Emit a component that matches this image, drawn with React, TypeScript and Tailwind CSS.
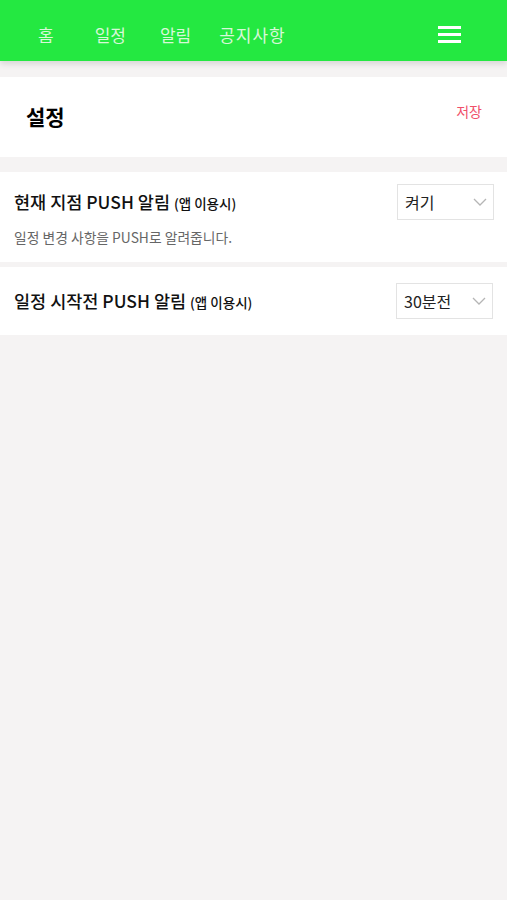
import React from 'react';

const font = { fontFamily: '"Noto Sans CJK KR", "Noto Sans", sans-serif' };

const Chevron = () => (
  <svg width="14" height="8" viewBox="0 0 14 8" fill="none">
    <path d="M1 1l6 6 6-6" stroke="#b5b5b5" strokeWidth="1.3" />
  </svg>
);

const SelectBox: React.FC<{ value: string }> = ({ value }) => (
  <div className="flex items-center justify-between w-[97px] h-[36px] border border-[#e3e3e3] bg-white pl-[7px] pr-[6px] text-[16px] text-[#222]">
    <span>{value}</span>
    <Chevron />
  </div>
);

export default function App() {
  return (
    <div className="min-h-[900px] bg-[#f5f3f3]" style={font}>
      {/* Header */}
      <div className="relative h-[61px] bg-[#24e841] flex items-center pt-[8px] px-[38px] shadow-[0_3px_6px_rgba(0,0,0,0.12)] z-10">
        <nav className="flex items-center text-[17px] text-[#d8f8d8]">
          <span className="mr-[41px]">홈</span>
          <span className="mr-[34px]">일정</span>
          <span className="mr-[28px]">알림</span>
          <span className="tracking-[1px]">공지사항</span>
        </nav>
        <div className="ml-auto mr-[8px] flex flex-col gap-[4px]">
          <span className="block w-[23px] h-[3px] bg-white" />
          <span className="block w-[23px] h-[3px] bg-white" />
          <span className="block w-[23px] h-[3px] bg-white" />
        </div>
      </div>

      {/* Title card */}
      <div className="mt-[16px] h-[80px] bg-white flex items-center justify-between pl-[26px] pr-[25px]">
        <h1 className="text-[21px] font-bold text-black mt-[0px]">설정</h1>
        <button className="text-[14px] text-[#f0506a] -mt-[12px]">저장</button>
      </div>

      {/* Row 1 */}
      <div className="mt-[15px] bg-white h-[90px] pl-[14px] pr-[13px] pt-[12px]">
        <div className="flex items-center justify-between">
          <div className="text-[17.5px] font-medium text-[#111]">
            현재 지점 PUSH 알림 <span className="text-[13.5px]">(앱 이용시)</span>
          </div>
          <SelectBox value="켜기" />
        </div>
        <p className="mt-[7px] text-[13.8px] text-[#666]">일정 변경 사항을 PUSH로 알려줍니다.</p>
      </div>

      {/* Row 2 */}
      <div className="mt-[5px] bg-white h-[68px] pl-[14px] pr-[14px] flex items-center justify-between">
        <div className="text-[17.5px] font-medium text-[#111]">
          일정 시작전 PUSH 알림 <span className="text-[13.5px]">(앱 이용시)</span>
        </div>
        <SelectBox value="30분전" />
      </div>
    </div>
  );
}
